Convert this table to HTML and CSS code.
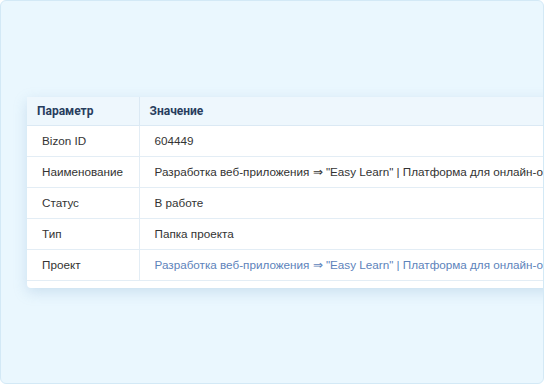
FILE: index.html
```html
<!DOCTYPE html>
<html lang="ru">
<head>
<meta charset="utf-8">
<link rel="stylesheet" href="styles.css">
</head>
<body>
<div class="frame">
  <div class="card">
    <table class="params">
      <thead>
        <tr><th class="c1">Параметр</th><th class="c2">Значение</th></tr>
      </thead>
      <tbody>
        <tr><td class="c1">Bizon ID</td><td class="c2">604449</td></tr>
        <tr><td class="c1">Наименование</td><td class="c2">Разработка веб-приложения ⇒ "Easy Learn" | Платформа для онлайн-обучения</td></tr>
        <tr><td class="c1">Статус</td><td class="c2">В работе</td></tr>
        <tr><td class="c1">Тип</td><td class="c2">Папка проекта</td></tr>
        <tr><td class="c1">Проект</td><td class="c2"><a class="link" href="#">Разработка веб-приложения ⇒ "Easy Learn" | Платформа для онлайн-обучения</a></td></tr>
      </tbody>
    </table>
  </div>
</div>
</body>
</html>
```

FILE: styles.css
```css
html, body { margin: 0; padding: 0; }
body {
  width: 544px;
  height: 384px;
  background: #ffffff;
  font-family: "Liberation Sans", Arial, sans-serif;
}
.frame {
  box-sizing: border-box;
  width: 544px;
  height: 384px;
  border: 1px solid #d3e9f6;
  border-radius: 6px;
  background: #eaf7fe;
  overflow: hidden;
  padding: 96px 0 0 26px;
}
.card {
  width: 900px;
  background: #ffffff;
  border-radius: 4px;
  box-shadow: 0 4px 14px rgba(120, 160, 200, 0.28);
  padding-bottom: 7px;
}
.params {
  border-collapse: collapse;
  width: 100%;
  table-layout: fixed;
}
.params th, .params td { box-sizing: border-box; }
.params .c1 { width: 112px; }
.params th {
  background: #eef7fd;
  color: #283d5e;
  font-family: Roboto, "Liberation Sans", sans-serif;
  font-weight: 700;
  font-size: 12px;
  text-align: left;
  height: 28px;
  padding: 0 10px;
  border-bottom: 1px solid #dbe9f4;
  border-right: 1px solid #dbe9f4;
  white-space: nowrap;
}
.params td {
  font-size: 11.7px;
  color: #333333;
  height: 31px;
  padding: 0 15px;
  border-bottom: 1px solid #e3edf5;
  border-right: 1px solid #e3edf5;
  white-space: nowrap;
}
.params .c2 { border-right: none; }
.link {
  color: #5d83bb;
  text-decoration: none;
}
```
